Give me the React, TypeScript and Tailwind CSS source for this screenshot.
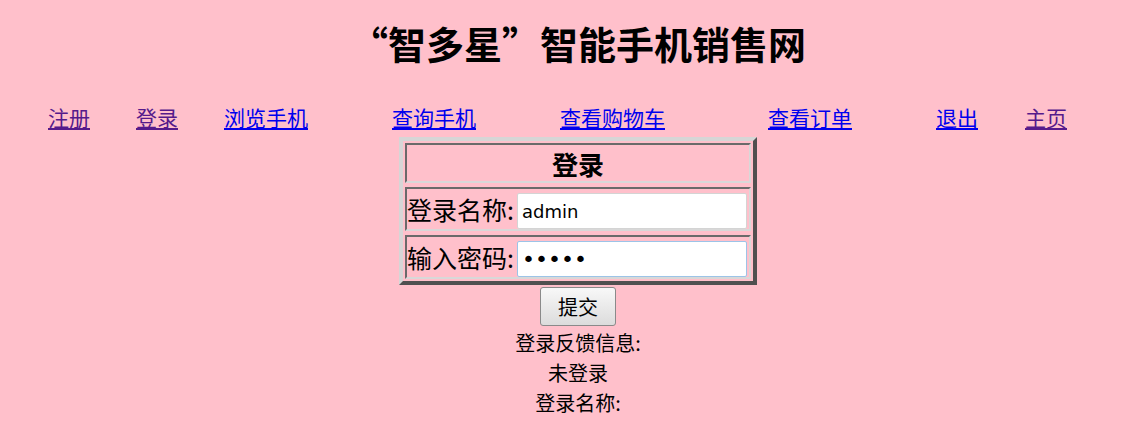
const navItems = [
  { label: "注册", width: "w-[88px]", visited: true },
  { label: "登录", width: "w-[88px]", visited: true },
  { label: "浏览手机", width: "w-[168px]", visited: false },
  { label: "查询手机", width: "w-[168px]", visited: false },
  { label: "查看购物车", width: "w-[208px]", visited: false },
  { label: "查看订单", width: "w-[168px]", visited: false },
  { label: "退出", width: "w-[89px]", visited: false },
  { label: "主页", width: "w-[60px]", visited: true },
];

export default function App() {
  return (
    <div className="min-h-[437px] bg-[#ffc0cb] text-black font-['Noto_Sans_CJK_SC','Noto_Sans',sans-serif]">
      <h1 className="pt-[16px] pl-[23px] text-center text-[38px] font-bold leading-[54px]">
        “智多星”智能手机销售网
      </h1>

      <nav className="mt-[32px] mb-[2px] flex pl-[48px] text-[21px] leading-[30px]">
        {navItems.map((item) => (
          <div key={item.label} className={`${item.width} shrink-0`}>
            <a
              href="#"
              className={`underline ${
                item.visited ? "text-[#551a8b]" : "text-[#0000ee]"
              }`}
            >
              {item.label}
            </a>
          </div>
        ))}
      </nav>

      <div className="flex flex-col items-center pl-[23px]">
        <div className="mt-[3px] w-[358px] border-4 border-t-[#d6d6d6] border-l-[#d6d6d6] border-b-[#505050] border-r-[#505050] p-[2px] flex flex-col gap-[4px]">
          <div className="h-[40px] border-2 border-t-[#6a6a6a] border-l-[#6a6a6a] border-b-[#d8d8d8] border-r-[#d8d8d8] flex items-center justify-center text-[26px] font-bold">
            登录
          </div>
          <div className="h-[44px] border-2 border-t-[#6a6a6a] border-l-[#6a6a6a] border-b-[#d8d8d8] border-r-[#d8d8d8] flex items-center text-[25px] leading-[30px]">
            <span className="w-[110px] shrink-0 whitespace-nowrap">登录名称:</span>
            <input
              readOnly
              value="admin"
              className="h-[36px] w-[230px] mt-[4px] bg-white border border-[#d4d4d4] rounded-[2px] px-[4px] text-[18px] text-black outline-none font-['DejaVu_Sans',sans-serif]"
            />
          </div>
          <div className="h-[44px] border-2 border-t-[#6a6a6a] border-l-[#6a6a6a] border-b-[#d8d8d8] border-r-[#d8d8d8] flex items-center text-[25px] leading-[30px]">
            <span className="w-[110px] shrink-0 whitespace-nowrap">输入密码:</span>
            <input
              readOnly
              type="password"
              value="admin"
              className="h-[36px] w-[230px] mt-[4px] bg-white border border-[#9cc4e8] rounded-[2px] px-[4px] text-[22px] text-black outline-none font-['DejaVu_Sans',sans-serif]"
            />
          </div>
        </div>

        <button className="mt-[2px] h-[39px] w-[76px] rounded-[3px] border border-[#8a8a8a] bg-gradient-to-b from-[#f8f8f8] to-[#dcdcdc] text-[20px] leading-[24px]">
          提交
        </button>

        <div className="flex flex-col items-center text-[20px] leading-[30px] mt-[2px]">
          <p>登录反馈信息:</p>
          <p>未登录</p>
          <p>登录名称:</p>
        </div>
      </div>
    </div>
  );
}
